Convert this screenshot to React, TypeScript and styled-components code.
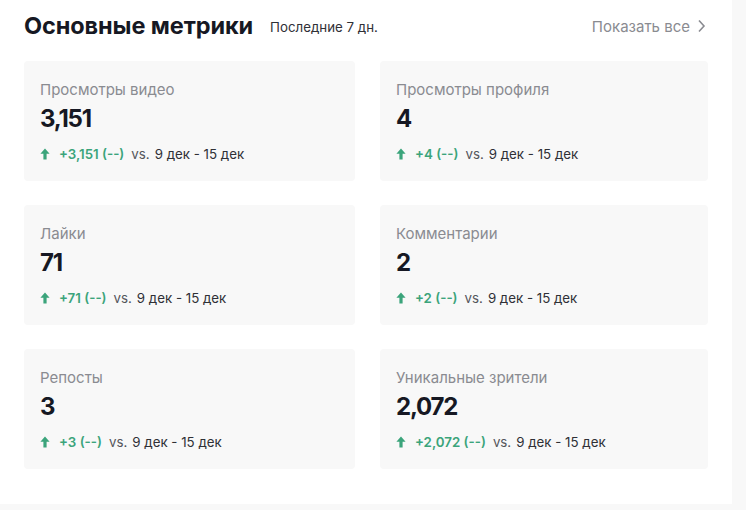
import React from "react";
import styled, { createGlobalStyle } from "styled-components";

const Global = createGlobalStyle`
  html, body { margin: 0; padding: 0; background: #f8f8f8; }
  body { font-family: Inter, "Noto Sans", Arial, sans-serif; color: #161823; }
`;

const Panel = styled.section`
  width: 732px;
  height: 504px;
  box-sizing: border-box;
  background: #ffffff;
  padding: 12px 24px 0 24px;
`;

const Header = styled.header`
  display: flex;
  align-items: center;
  height: 28px;
`;

const Title = styled.h2`
  margin: 0;
  font-size: 23.5px;
  font-weight: 700;
  line-height: 28px;
  color: #161823;
  letter-spacing: -0.1px;
`;

const Period = styled.span`
  margin-left: 17px;
  font-size: 13.3px;
  line-height: 18px;
  color: #2f3036;
  margin-top: 1px;
`;

const ShowAll = styled.a`
  margin-left: auto;
  display: flex;
  align-items: center;
  gap: 7px;
  font-size: 15px;
  color: #8a8b91;
  text-decoration: none;
  cursor: pointer;
  margin-right: 2px;
`;

const Grid = styled.div`
  margin-top: 21px;
  display: grid;
  grid-template-columns: 331px 328px;
  column-gap: 25px;
  row-gap: 24px;
`;

const Card = styled.div`
  background: #f8f8f8;
  border-radius: 4px;
  height: 120px;
  box-sizing: border-box;
  padding: 19px 16px 16px;
  display: flex;
  flex-direction: column;
`;

const Label = styled.div`
  font-size: 15px;
  line-height: 20px;
  color: #8a8b91;
`;

const Value = styled.div`
  margin-top: 4px;
  font-size: 24px;
  line-height: 30px;
  font-weight: 700;
  color: #161823;
  letter-spacing: -1.2px;
`;

const Change = styled.div`
  margin-top: 10px;
  display: flex;
  align-items: center;
  font-size: 13.3px;
  line-height: 20px;
`;

const Delta = styled.span`
  color: #3ba47b;
  font-weight: 600;
  margin-left: 9px;
`;

const Vs = styled.span`
  color: #54555b;
  margin-left: 7px;
`;

const Range = styled.span`
  color: #2f3036;
  margin-left: 5px;
`;

const UpArrow = () => (
  <svg width="10" height="12" viewBox="0 0 10 12" fill="#3ba47b">
    <path d="M5 0.5 L9.6 5.8 H6.6 V11.5 H3.4 V5.8 H0.4 Z" />
  </svg>
);

const Chevron = () => (
  <svg width="9" height="14" viewBox="0 0 9 14" fill="none" stroke="#8a8b91" strokeWidth="1.6">
    <path d="M2 1.5 L7 7 L2 12.5" />
  </svg>
);

const metrics = [
  { label: "Просмотры видео", value: "3,151", delta: "+3,151 (--)" },
  { label: "Просмотры профиля", value: "4", delta: "+4 (--)" },
  { label: "Лайки", value: "71", delta: "+71 (--)" },
  { label: "Комментарии", value: "2", delta: "+2 (--)" },
  { label: "Репосты", value: "3", delta: "+3 (--)" },
  { label: "Уникальные зрители", value: "2,072", delta: "+2,072 (--)" },
];

export default function App() {
  return (
    <>
      <Global />
      <Panel>
        <Header>
          <Title>Основные метрики</Title>
          <Period>Последние 7 дн.</Period>
          <ShowAll>
            Показать все
            <Chevron />
          </ShowAll>
        </Header>
        <Grid>
          {metrics.map((m) => (
            <Card key={m.label}>
              <Label>{m.label}</Label>
              <Value>{m.value}</Value>
              <Change>
                <UpArrow />
                <Delta>{m.delta}</Delta>
                <Vs>vs.</Vs>
                <Range>9 дек - 15 дек</Range>
              </Change>
            </Card>
          ))}
        </Grid>
      </Panel>
    </>
  );
}
